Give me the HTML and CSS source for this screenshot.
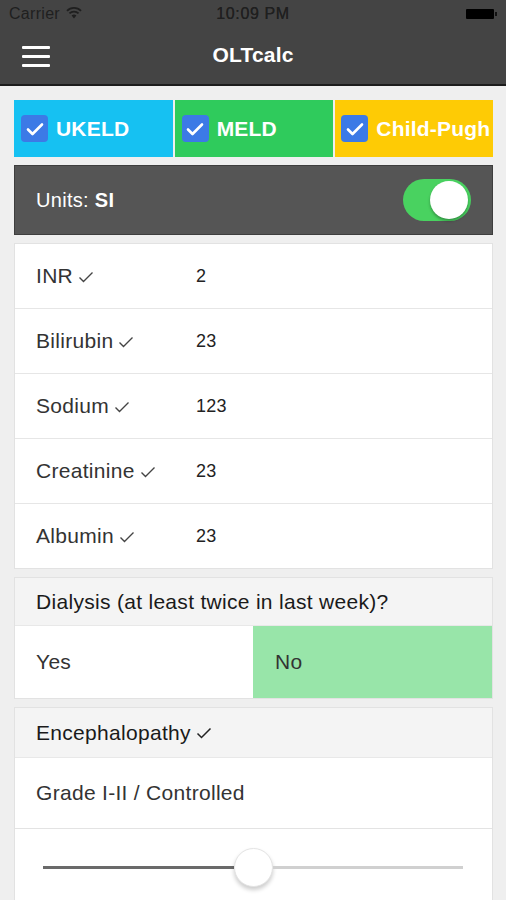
FILE: index.html
```html
<!DOCTYPE html>
<html>
<head>
<meta charset="utf-8">
<link rel="stylesheet" href="styles.css">
</head>
<body>
<header class="topbar">
  <div class="status">
    <div class="carrier">Carrier
      <svg class="wifi" width="16" height="12" viewBox="0 0 16 12"><path d="M8 11.5 L5.6 8.6 A3.6 3.6 0 0 1 10.4 8.6 Z" fill="#1f1f1f"/><path d="M3.4 6.4 A6.6 6.6 0 0 1 12.6 6.4" stroke="#1f1f1f" stroke-width="1.8" fill="none"/><path d="M1 3.8 A10 10 0 0 1 15 3.8" stroke="#1f1f1f" stroke-width="1.8" fill="none"/></svg>
    </div>
    <div class="time">10:09 PM</div>
    <div class="battery"><span class="cell"></span><span class="nub"></span></div>
  </div>
  <nav class="nav">
    <div class="burger"><span></span><span></span><span></span></div>
    <div class="title">OLTcalc</div>
  </nav>
</header>

<main class="content">
  <div class="scores">
    <div class="score ukeld"><span class="box"><svg width="18" height="14" viewBox="0 0 18 14"><path d="M2 7.5 L6.5 12 L16 2.5" stroke="#fff" stroke-width="2.6" fill="none" stroke-linecap="round" stroke-linejoin="round"/></svg></span>UKELD</div>
    <div class="score meld"><span class="box"><svg width="18" height="14" viewBox="0 0 18 14"><path d="M2 7.5 L6.5 12 L16 2.5" stroke="#fff" stroke-width="2.6" fill="none" stroke-linecap="round" stroke-linejoin="round"/></svg></span>MELD</div>
    <div class="score cp"><span class="box"><svg width="18" height="14" viewBox="0 0 18 14"><path d="M2 7.5 L6.5 12 L16 2.5" stroke="#fff" stroke-width="2.6" fill="none" stroke-linecap="round" stroke-linejoin="round"/></svg></span>Child-Pugh</div>
  </div>

  <div class="units">
    <div class="units-label">Units: <b>SI</b></div>
    <div class="switch"><span class="knob"></span></div>
  </div>

  <div class="card rows">
    <div class="row"><span class="label">INR <svg class="tick" width="16" height="12" viewBox="0 0 16 12"><path d="M1.5 6.5 L5.5 10.5 L14.5 1.5" stroke="#444" stroke-width="1.4" fill="none"/></svg></span><span class="value">2</span></div>
    <div class="row"><span class="label">Bilirubin <svg class="tick" width="16" height="12" viewBox="0 0 16 12"><path d="M1.5 6.5 L5.5 10.5 L14.5 1.5" stroke="#444" stroke-width="1.4" fill="none"/></svg></span><span class="value">23</span></div>
    <div class="row"><span class="label">Sodium <svg class="tick" width="16" height="12" viewBox="0 0 16 12"><path d="M1.5 6.5 L5.5 10.5 L14.5 1.5" stroke="#444" stroke-width="1.4" fill="none"/></svg></span><span class="value">123</span></div>
    <div class="row"><span class="label">Creatinine <svg class="tick" width="16" height="12" viewBox="0 0 16 12"><path d="M1.5 6.5 L5.5 10.5 L14.5 1.5" stroke="#444" stroke-width="1.4" fill="none"/></svg></span><span class="value">23</span></div>
    <div class="row"><span class="label">Albumin <svg class="tick" width="16" height="12" viewBox="0 0 16 12"><path d="M1.5 6.5 L5.5 10.5 L14.5 1.5" stroke="#444" stroke-width="1.4" fill="none"/></svg></span><span class="value">23</span></div>
  </div>

  <div class="card dialysis">
    <div class="card-head">Dialysis (at least twice in last week)?</div>
    <div class="choices">
      <div class="choice">Yes</div>
      <div class="choice selected">No</div>
    </div>
  </div>

  <div class="card enceph">
    <div class="card-head">Encephalopathy <svg class="tick" width="16" height="12" viewBox="0 0 16 12"><path d="M1.5 6.5 L5.5 10.5 L14.5 1.5" stroke="#222" stroke-width="1.5" fill="none"/></svg></div>
    <div class="grade">Grade I-II / Controlled</div>
    <div class="slider-row">
      <div class="slider">
        <div class="track-on"></div>
        <div class="thumb"></div>
        <div class="track-off"></div>
      </div>
    </div>
  </div>
</main>
</body>
</html>
```

FILE: styles.css
```css
* { box-sizing: border-box; }
html, body { margin: 0; padding: 0; }
body {
  width: 506px;
  height: 900px;
  overflow: hidden;
  background: #efefef;
  font-family: "Liberation Sans", Arial, "Helvetica Neue", sans-serif;
  letter-spacing: 0.3px;
}

.topbar {
  background: #444444;
  border-bottom: 2px solid #1c1c1c;
  height: 86px;
}
.status {
  height: 28px;
  display: flex;
  align-items: center;
  justify-content: space-between;
  padding: 0 9px;
  color: #1f1f1f;
  font-size: 16px;
  position: relative;
}
.carrier { display: flex; align-items: center; gap: 6px; width: 120px; }
.wifi { margin-top: -2px; }
.time { font-size: 16px; letter-spacing: 0.6px; font-weight: 400; text-shadow: 0 0 0.4px #1f1f1f; }
.battery { width: 120px; display: flex; justify-content: flex-end; align-items: center; }
.battery .cell { width: 28px; height: 10px; background: #000; border-radius: 1px; }
.battery .nub { width: 2px; height: 4px; background: #111; margin-left: 1px; }

.nav {
  height: 56px;
  display: flex;
  align-items: center;
  position: relative;
  padding-left: 22px;
}
.burger { width: 28px; display: flex; flex-direction: column; gap: 6px; }
.burger span { display: block; height: 3px; background: #fff; border-radius: 1px; }
.title {
  position: absolute;
  left: 0; right: 0;
  top: 15px;
  text-align: center;
  color: #fff;
  font-size: 21px;
  font-weight: 700;
  letter-spacing: 0.2px;
  pointer-events: none;
}

.content {
  padding: 14px 13px 0 14px;
  display: flex;
  flex-direction: column;
  gap: 8px;
}

.scores {
  display: flex;
  gap: 2px;
  height: 57px;
}
.score {
  flex: 1;
  display: flex;
  align-items: center;
  padding-left: 7px;
  color: #fff;
  font-size: 21px;
  font-weight: 700;
  letter-spacing: 0.2px;
  gap: 8px;
}
.ukeld { background: #16c1f2; }
.meld { background: #2fcb5c; }
.cp { background: #fecb05; padding-left: 6px; }
.box {
  width: 27px; height: 27px;
  background: #3c7ae6;
  border-radius: 4px;
  display: flex; align-items: center; justify-content: center;
}

.units {
  height: 70px;
  background: #555555;
  border: 1px solid #3e3e3e;
  display: flex;
  align-items: center;
  justify-content: space-between;
  padding: 0 21px 0 21px;
  color: #fff;
  font-size: 20px;
}
.switch {
  width: 68px; height: 42px;
  background: #49d260;
  border-radius: 21px;
  position: relative;
  display: flex;
  align-items: center;
  justify-content: flex-end;
  padding-right: 3px;
}
.knob {
  width: 38px; height: 38px;
  border-radius: 50%;
  background: #fff;
  box-shadow: 0 2px 3px rgba(0,0,0,0.3);
}

.card {
  background: #fff;
  border: 1px solid #e2e2e2;
}
.rows .row {
  height: 65px;
  display: flex;
  align-items: center;
  padding-left: 21px;
  border-top: 1px solid #e6e6e6;
}
.rows .row:first-child { border-top: none; height: 64px; }
.label {
  width: 160px;
  font-size: 21px;
  color: #333;
  display: flex;
  align-items: center;
  gap: 5px;
}
.tick { margin-top: 1px; }
.value { font-size: 18px; color: #222; }

.card-head {
  background: #f4f4f4;
  height: 48px;
  display: flex;
  align-items: center;
  gap: 5px;
  padding-left: 21px;
  font-size: 21px;
  color: #1a1a1a;
  border-bottom: 1px solid #e8e8e8;
}
.choices { display: flex; height: 72px; }
.choice {
  flex: 1;
  display: flex;
  align-items: center;
  padding-left: 21px;
  font-size: 21px;
  color: #333;
}
.choice.selected { background: #98e5a9; padding-left: 22px; }

.enceph .card-head { height: 50px; }
.grade {
  height: 71px;
  display: flex;
  align-items: center;
  padding-left: 21px;
  font-size: 21px;
  color: #333;
  border-bottom: 1px solid #e3e3e3;
}
.slider-row { height: 90px; padding: 18px 29px 0 28px; }
.slider { display: flex; align-items: center; height: 40px; }
.track-on { width: 191px; height: 3px; background: #6a6a6a; }
.track-off { flex: 1; height: 3px; background: #d0d0d0; }
.thumb {
  width: 39px; height: 39px;
  border-radius: 50%;
  background: #fff;
  border: 1px solid #e4e4e4;
  box-shadow: 0 3px 4px rgba(0,0,0,0.2);
}
```
